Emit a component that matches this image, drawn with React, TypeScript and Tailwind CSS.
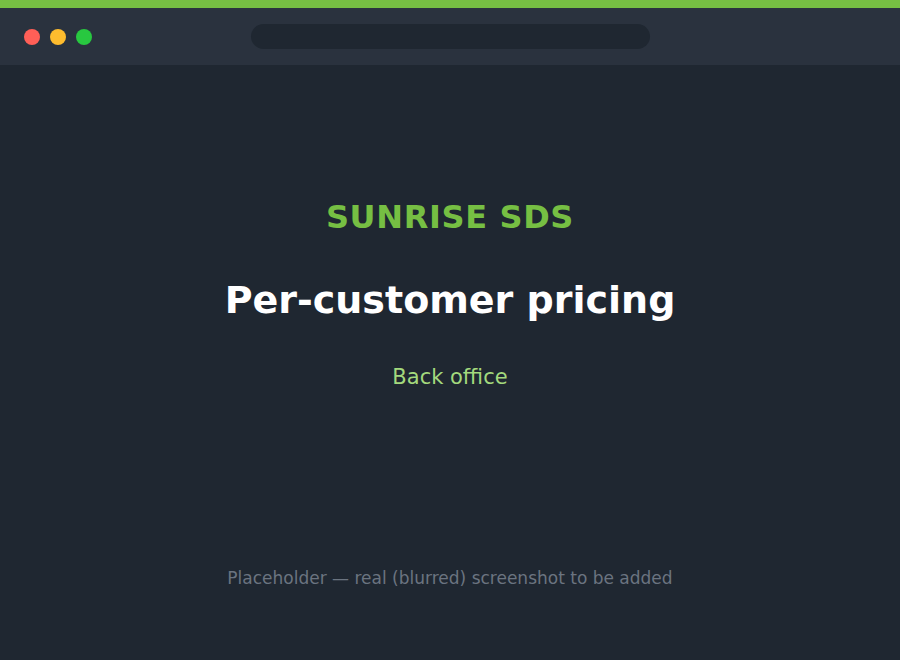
import React from "react";

const dots = ["bg-[#ff5f57]", "bg-[#febc2e]", "bg-[#28c840]"];

export default function App() {
  return (
    <div className="w-[900px] h-[660px] flex flex-col bg-[#1f2731] font-['DejaVu_Sans',sans-serif] overflow-hidden">
      <div className="h-2 bg-[#76bf43]" />
      <div className="h-[57px] bg-[#2a323e] flex items-center px-6 relative">
        <div className="flex gap-2.5">
          {dots.map((c) => (
            <span key={c} className={`w-4 h-4 rounded-full ${c}`} />
          ))}
        </div>
        <div className="absolute left-[251px] top-4 w-[399px] h-[25px] rounded-full bg-[#1f2731]" />
      </div>
      <main className="flex-1 flex flex-col items-center">
        <h2 className="mt-[134px] text-[32px] leading-9 font-bold tracking-[0.02em] text-[#76bf43]">SUNRISE SDS</h2>
        <h1 className="mt-[42px] text-[38px] leading-[46px] font-bold text-white">Per-customer pricing</h1>
        <p className="mt-[40px] text-[21px] leading-7 text-[#a3d97d]">Back office</p>
        <p className="mt-[175px] text-[17px] leading-6 text-[#6b7480]">
          Placeholder — real (blurred) screenshot to be added
        </p>
      </main>
    </div>
  );
}
